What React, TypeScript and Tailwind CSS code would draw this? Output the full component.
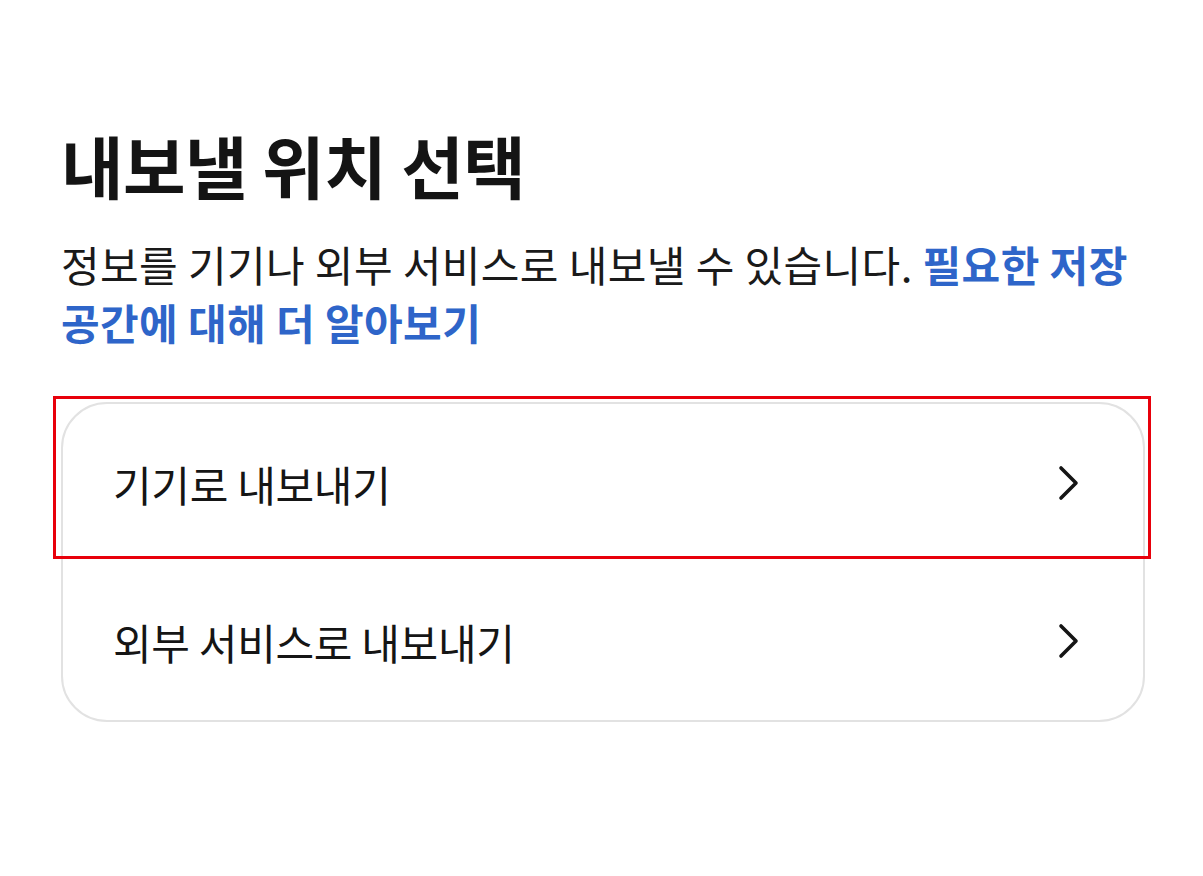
const font = { fontFamily: '"Noto Sans CJK KR", "Noto Sans", sans-serif' };

function Chevron() {
  return (
    <svg width="24" height="36" viewBox="0 0 24 36" fill="none" className="text-[#151515]">
      <polyline
        points="4,3 19,18 4,33"
        stroke="currentColor"
        strokeWidth="3.6"
        strokeLinecap="round"
        strokeLinejoin="round"
      />
    </svg>
  );
}

function Row({ label }: { label: string }) {
  return (
    <div className="flex items-center justify-between h-[158px] pl-[50px] pr-[62px]">
      <span className="text-[42px] text-[#151515] tracking-[-0.3px]">{label}</span>
      <Chevron />
    </div>
  );
}

export default function App() {
  return (
    <div className="w-[1203px] h-[876px] bg-white" style={font}>
      <div className="pt-[120px] px-[61px]">
        <h1 className="text-[68px] font-bold leading-[90px] text-[#141414] tracking-[-0.5px]">
          내보낼 위치 선택
        </h1>
        <p className="mt-[25px] text-[42px] leading-[58px] text-[#1a1a1a] tracking-[0.4px]">
          정보를 기기나 외부 서비스로 내보낼 수 있습니다.{" "}
          <span className="font-bold text-[#2e65c9]">필요한 저장 공간에 대해 더 알아보기</span>
        </p>

        <div className="relative mt-[51px]">
          <div className="border-2 border-[#e2e2e2] rounded-[46px] w-[1084px]">
            <Row label="기기로 내보내기" />
            <Row label="외부 서비스로 내보내기" />
          </div>
          {/* annotation box around the first row */}
          <div className="absolute left-[-8px] top-[-6px] w-[1098px] h-[163px] border-[3px] border-[#e8000b] pointer-events-none" />
        </div>
      </div>
    </div>
  );
}
